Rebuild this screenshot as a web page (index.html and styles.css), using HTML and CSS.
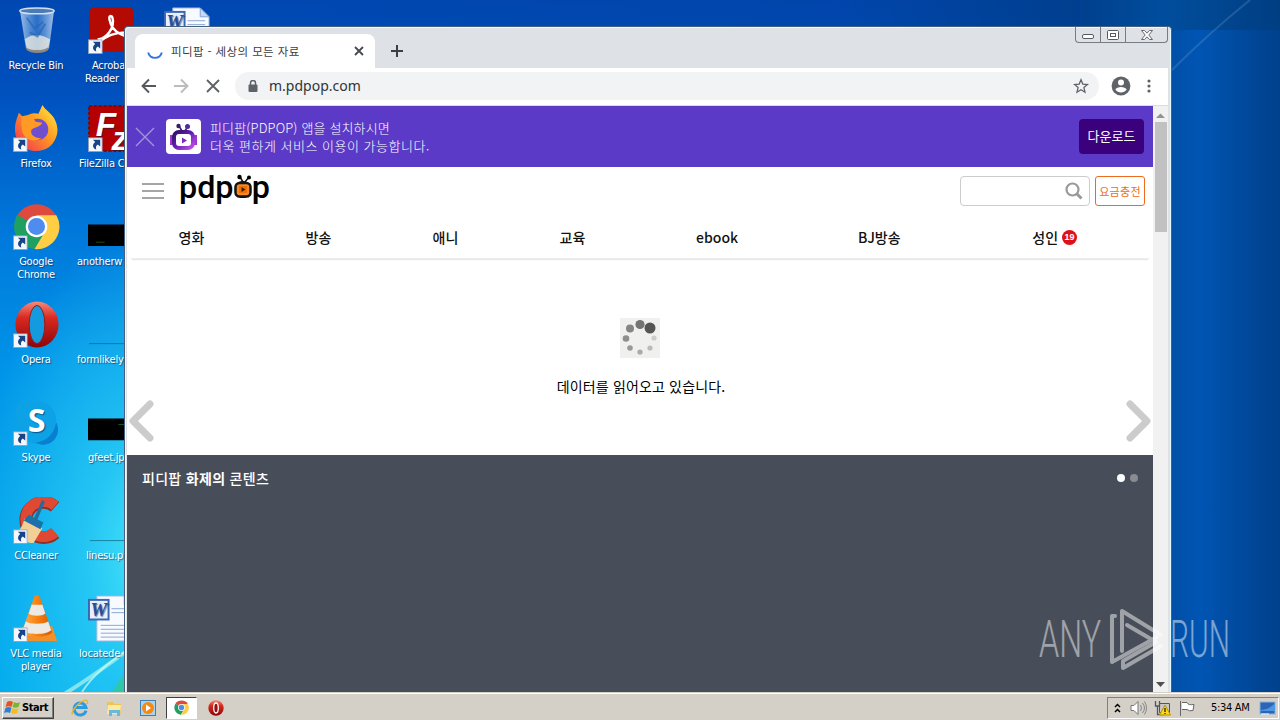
FILE: index.html
```html
<!DOCTYPE html>
<html lang="ko">
   <head>
      <meta charset="UTF-8" />
      <meta name="viewport" content="width=device-width, initial-scale=1.0" />
      <title>피디팝 - 세상의 모든 자료</title>
      <link rel="stylesheet" href="styles.css">
   </head>
   <body>
      <svg width="0" height="0" class="defs">
         <defs>
            <symbol id="shortcut" viewBox="0 0 15 15">
               <rect x=".5" y=".5" width="14" height="14" fill="#f4f8fc" stroke="#8fa3b8" />
               <path d="M5 2.5h7.5v7L10 7.4c-2 1.3-2.3 3-1.5 5.1C4.500 11.500 4 7.500 7.400 4.900z" fill="#174487" />
            </symbol>
            <symbol id="chrome" viewBox="0 0 48 48">
               <path d="M24 24 4.500 12.500A23 23 0 0 1 44 12.500z" fill="#dd4b3e" />
               <path d="M24 24 4.500 12A23 23 0 0 0 22 47l11-18z" fill="#1fa060" />
               <path d="M24 12.500H44.300A23 23 0 0 1 22 47L34 27z" fill="#ffce44" />
               <circle cx="24" cy="24" r="11" fill="#fff" />
               <circle cx="24" cy="24" r="8.700" fill="#4e8cf0" />
            </symbol>
            <linearGradient id="red" x2="0" y2="1">
               <stop stop-color="#f58a7c" /><stop offset=".35" stop-color="#d92a20" /><stop offset="1" stop-color="#8d0508" />
            </linearGradient>
            <linearGradient id="fire" x1="1" x2="0" y2="1">
               <stop stop-color="#fff14a" /><stop offset=".45" stop-color="#ff9820" /><stop offset="1" stop-color="#f0265c" />
            </linearGradient>
            <linearGradient id="glass">
               <stop stop-color="#c5dcf0" stop-opacity=".8" /><stop offset=".5" stop-color="#4c8cd8" stop-opacity=".55" /><stop offset="1" stop-color="#cde0f5" stop-opacity=".8" />
            </linearGradient>
            <linearGradient id="cone">
               <stop stop-color="#ffb050" /><stop offset=".5" stop-color="#f88210" /><stop offset="1" stop-color="#d85a00" />
            </linearGradient>
            <linearGradient id="tv" x2="1" y2="1">
               <stop stop-color="#321060" /><stop offset=".5" stop-color="#6520b8" /><stop offset="1" stop-color="#c350e8" />
            </linearGradient>
            <symbol id="worddoc" viewBox="0 0 48 48">
               <path d="M9 1h28l9 9v37H9z" fill="#f7faff" stroke="#9db6dc" />
               <path d="M37 1v9h9z" fill="#c8daf3" stroke="#84a4d2" />
               <path d="M24 14h18M24 18h18M13 31h29M13 35h29M13 39h29M13 43h29" stroke="#8aa6d4" />
               <rect x="1" y="5" width="20" height="20" fill="#e8f0fc" stroke="#3b67b5" stroke-width="2" />
               <text x="11" y="21" class="word-w" text-anchor="middle">W</text>
            </symbol>
         </defs>
      </svg>

      <main class="desktop">
         <svg class="wallpaper" width="1280" height="692">
            <path d="M0 728Q55 705 128 650" fill="none" stroke="#a5f0ef" stroke-width="4" opacity=".75" />
            <path d="M82 692Q96 670 128 650" fill="none" stroke="#c4fff0" stroke-width="2" opacity=".7" />
            <path d="M112 692L128 668V692z" fill="#35c98a" opacity=".7" />
            <path d="M1170 72Q1210 32 1250 0" fill="none" stroke="#79a9d8" stroke-width="2" opacity=".25" />
         </svg>

         <div class="icon-column">
            <div class="icon">
               <svg viewBox="0 0 48 48">
                  <path d="M7 3h35l-5 38c-1 6-22 6-24 0z" fill="url(#glass)" />
                  <path d="M12 33c8-7 18-5 26 0l-2 9c-4 4-18 4-22 0z" fill="#e9e9df" opacity=".8" />
                  <path d="M13 41c5 4 18 4 23 0v3c-4 4-18 4-22 0z" fill="#8d8880" />
                  <path d="M14 11l8 11 9-7M17 26l8 4 8-13" stroke="#2768b4" fill="none" stroke-width="2" opacity=".7" />
                  <ellipse cx="24.500" cy="4" rx="17.500" ry="3" fill="#497cb9" stroke="#d4e0e9" stroke-width="1.500" />
               </svg>
               <span>Recycle Bin</span>
            </div>
            <div class="icon">
               <svg viewBox="0 0 48 48">
                  <path d="M2 25C2 18 4 14 6 8l5 5C17 8 22 8 26 9l4-9c3 5 7 7 11 12 4 6 6 14 3 21-3 9-11 14-20 14C12 47 2 38 2 25z" fill="url(#fire)" />
                  <circle cx="25" cy="25" r="11" fill="#6f4fd0" />
                  <path d="M8 12c8-3 12-1 15 5l7 1c-3 5-8 4-11 7-2 4 2 9 10 9-9 6-20-1-20-10z" fill="#ff9a24" />
                  <use href="#shortcut" x="0" y="33" width="15" height="15" />
               </svg>
               <span>Firefox</span>
            </div>
            <div class="icon">
               <svg viewBox="0 0 48 48"><use href="#chrome" width="48" height="48" /><use href="#shortcut" y="33" width="15" height="15" /></svg>
               <span>Google<br />Chrome</span>
            </div>
            <div class="icon">
               <svg viewBox="0 0 48 48">
                  <ellipse cx="24.500" cy="24" rx="22" ry="23.500" fill="url(#red)" />
                  <ellipse cx="24.500" cy="24" rx="8" ry="19.500" fill="#149bdf" stroke="#971a18" />
                  <use href="#shortcut" y="33" width="15" height="15" />
               </svg>
               <span>Opera</span>
            </div>
            <div class="icon">
               <svg viewBox="0 0 48 48">
                  <path d="M2 14C2 4 13-3 21 3 35 0 45 10 44 24c5 8 0 20-9 22-6 2-9-1-13-1C8 44 2 34 4 23z" fill="#0ca2e5" />
                  <path d="M44 24c5 8 0 20-9 22-6 2-9-1-13-1 14-2 20-10 22-21z" fill="#087fd0" />
                  <text x="24" y="34" class="skype-s" text-anchor="middle">S</text>
                  <use href="#shortcut" y="33" width="15" height="15" />
               </svg>
               <span>Skype</span>
            </div>
            <div class="icon">
               <svg viewBox="0 0 48 48">
                  <path d="M43 10A18 18 0 1 0 43 37" fill="none" stroke="#8e3025" stroke-width="13" />
                  <path d="M43 9A18 18 0 1 0 43 36" fill="none" stroke="#df4934" stroke-width="11" />
                  <path d="M12 22l18 10-9 15c-8 0-15-4-20-9 6-2 8-8 11-16z" fill="#f3cf98" />
                  <path d="M16 18l15 8-3 7-17-9z" fill="#1c72a8" />
                  <path d="M23 23 31 4" stroke="#28699b" stroke-width="3.500" />
                  <use href="#shortcut" y="33" width="15" height="15" />
               </svg>
               <span>CCleaner</span>
            </div>
            <div class="icon">
               <svg viewBox="0 0 48 48">
                  <path d="M10 32h30l5 15H7z" fill="#f29129" />
                  <path d="M22 1q3-2 5 0l13 37c-4 6-26 6-31 0z" fill="url(#cone)" />
                  <path d="M19 10h11l3 9c-3 3-14 3-17 0zM13 27c5 3 18 3 23 0l3 9c-5 5-25 5-29 0z" fill="#eee9e2" />
                  <use href="#shortcut" y="33" width="15" height="15" />
               </svg>
               <span>VLC media<br />player</span>
            </div>
         </div>

         <div class="icon-column second">
            <div class="icon">
               <svg viewBox="0 0 48 48">
                  <rect x="1" width="46" height="46" rx="6" fill="#b40a04" />
                  <path d="M11 33c7-1 17-11 14-22-1-3-4-2-3 2 2 10 10 16 19 17 4 0 3-4-3-4-10 0-20 4-27 10z" fill="none" stroke="#fff" stroke-width="2.500" />
                  <use href="#shortcut" y="33" width="15" height="15" />
               </svg>
               <span class="indent-15">Acroba<br /><i class="pull">Reader</i></span>
            </div>
            <div class="icon">
               <svg viewBox="0 0 48 48">
                  <rect x="1" y="1" width="46" height="46" fill="#b40000" stroke="#7d0909" stroke-width="2" stroke-dasharray="3 2" />
                  <text x="8" y="32" class="fz">F</text><text x="24" y="46" class="fz">z</text>
                  <use href="#shortcut" y="33" width="15" height="15" />
               </svg>
               <span class="indent-2">FileZilla C</span>
            </div>
            <div class="icon">
               <svg viewBox="0 0 48 48"><path d="M0 22h48v22H0z" /><path d="M8 40h9" stroke="#254b08" /></svg>
               <span>anotherw</span>
            </div>
            <div class="icon">
               <svg viewBox="0 0 48 48"><path d="M1 43.500h47" stroke="#1473ae" /></svg>
               <span>formlikely</span>
            </div>
            <div class="icon">
               <svg viewBox="0 0 48 48"><path d="M0 20h48v22H0z" /><path d="M31 26h9" stroke="#166028" /></svg>
               <span class="indent-11">gfeet.jp</span>
            </div>
            <div class="icon">
               <svg viewBox="0 0 48 48"><path d="M2 44.500h46" stroke="#16849f" /></svg>
               <span class="indent-9">linesu.p</span>
            </div>
            <div class="icon">
               <svg viewBox="0 0 48 48"><use href="#worddoc" width="48" height="48" /></svg>
               <span class="indent-2">locatede</span>
            </div>
         </div>

         <div class="icon-column third">
            <div class="icon"><svg viewBox="0 0 48 48"><use href="#worddoc" width="48" height="48" /></svg></div>
         </div>

         <section class="window">
            <div class="tabstrip">
               <div class="tab">
                  <svg class="spinner" viewBox="0 0 16 16"><path d="M1.200 8.500a7 7 0 0 0 13.600 0" fill="none" stroke="#3474e0" stroke-width="1.900" /></svg>
                  <span class="tab-title">피디팝 - 세상의 모든 자료</span>
                  <svg class="tab-close" viewBox="0 0 10 10"><path d="M1 1l8 8M9 1l-8 8" stroke="#45494d" stroke-width="1.800" /></svg>
               </div>
               <svg class="new-tab" viewBox="0 0 12 12"><path d="M6 0v12M0 6h12" stroke="#3c4043" stroke-width="2" /></svg>
               <div class="controls">
                  <span><svg width="12" height="6"><rect x=".5" y=".5" width="11" height="4" rx="1.500" fill="#fff" stroke="#565a60" /></svg></span>
                  <span><svg width="12" height="10"><rect x=".5" y=".5" width="11" height="9" rx="1" fill="#fff" stroke="#565a60" /><rect x="3.500" y="3.500" width="5" height="3" fill="none" stroke="#565a60" /></svg></span>
                  <span class="close"><svg width="12" height="10"><path d="M.5.5h3L6 3.200 8.500.5h3L7.800 5l3.700 4.500h-3L6 6.800 3.500 9.500h-3L4.200 5z" fill="#fff" stroke="#666a70" /></svg></span>
               </div>
            </div>

            <div class="toolbar">
               <svg width="16" height="16" viewBox="0 0 16 16"><path d="M15 8H2M8 1.500 1.500 8 8 14.500" fill="none" stroke="#55595e" stroke-width="1.900" /></svg>
               <svg width="16" height="16" viewBox="0 0 16 16"><path d="M1 8h13M8 1.500 14.500 8 8 14.500" fill="none" stroke="#babcbe" stroke-width="1.900" /></svg>
               <svg width="16" height="16" viewBox="0 0 16 16"><path d="M2 2l12 12M14 2 2 14" stroke="#5f6368" stroke-width="1.900" /></svg>
               <div class="address">
                  <svg width="10" height="12" viewBox="0 0 10 12"><path d="M2.500 5V3a2.500 2.500 0 0 1 5 0v2" fill="none" stroke="#5f6368" stroke-width="1.500" /><rect x=".5" y="4.500" width="9" height="7.500" rx="1" fill="#5f6368" /></svg>
                  <span>m.pdpop.com</span>
                  <svg class="star" width="16" height="16" viewBox="0 0 16 16"><path d="M8 1.800l1.800 4.300 4.700.4-3.600 3.100 1.100 4.600-4-2.400-4 2.400 1.100-4.600-3.600-3.100 4.700-.4z" fill="none" stroke="#5f6368" stroke-width="1.300" /></svg>
               </div>
               <svg class="profile" width="20" height="20" viewBox="0 0 20 20"><circle cx="10" cy="10" r="9.400" fill="#5f6368" /><circle cx="10" cy="6.500" r="3" fill="#fff" /><path d="M4.300 13.500c1.500-3.400 9.900-3.400 11.400 0-2.600 4-8.800 4-11.400 0z" fill="#fff" /></svg>
               <svg class="dots" width="4" height="14" viewBox="0 0 4 14"><g fill="#5f6368"><circle cx="2" cy="2" r="1.600" /><circle cx="2" cy="7" r="1.600" /><circle cx="2" cy="12" r="1.600" /></g></svg>
            </div>

            <div class="viewport">
               <div class="page">
                  <div class="app-banner">
                     <svg width="20" height="20" viewBox="0 0 20 20"><path d="M1 1l18 18M19 1 1 19" stroke="#a294d8" stroke-width="1.400" /></svg>
                     <svg class="app-icon" width="35" height="35" viewBox="0 0 35 35">
                        <rect width="35" height="35" rx="4" fill="#fff" />
                        <path d="M13 7l3 5M21 9l-3 4" stroke="#33206b" stroke-width="1.500" />
                        <circle cx="12.500" cy="7" r="2.200" fill="#33206b" /><circle cx="21.500" cy="7.500" r="2.500" fill="#4f2b9f" />
                        <path d="M7 17H5v8h3M28 17h2v8h-3" stroke="#a135d3" fill="none" stroke-width="2" />
                        <rect x="8" y="13" width="19" height="16" rx="5" fill="#fff" stroke="url(#tv)" stroke-width="4" />
                        <rect x="11" y="17" width="13" height="9" rx="3" fill="#fff" />
                        <path d="M16 18.500v6l5-3z" fill="#8128b9" />
                     </svg>
                     <p>피디팝(PDPOP) 앱을 설치하시면<br /><span>더욱 편하게 서비스 이용이 가능합니다.</span></p>
                     <button class="download">다운로드</button>
                  </div>

                  <header class="site-header">
                     <div class="top-row">
                        <svg class="menu" width="22" height="16"><path d="M0 1h22M0 8h22M0 15h22" stroke="#888" stroke-width="1.600" /></svg>
                        <svg class="logo" width="92" height="32" viewBox="0 0 92 32">
                           <text x="0" y="24" class="logo-text" textLength="91" lengthAdjust="spacingAndGlyphs">pdpop</text>
                           <path d="M61 3l3 5M70 3l-4 5" stroke="#111" stroke-width="1.500" />
                           <circle cx="60.500" cy="3" r="2.200" /><circle cx="70" cy="3.500" r="2" />
                           <rect x="56.500" y="9" width="15" height="13.500" rx="4" fill="#f5892a" stroke="#151515" stroke-width="2.500" />
                           <rect x="60" y="12" width="8" height="7" fill="#f06f05" /><path d="M62.500 13v5l4-2.500z" fill="#3e2104" />
                        </svg>
                        <div class="search"><svg width="18" height="18" viewBox="0 0 18 18"><circle cx="7.500" cy="7.500" r="6" fill="none" stroke="#999" stroke-width="2.200" /><path d="M12 12l4.500 4.500" stroke="#999" stroke-width="3" /></svg></div>
                        <button class="charge">요금충전</button>
                     </div>
                     <nav>
                        <a>영화</a><a>방송</a><a>애니</a><a>교육</a><a class="wide">ebook</a><a class="wide">BJ방송</a><a class="wider">성인 <b class="badge">19</b></a>
                     </nav>
                  </header>

                  <div class="loading">
                     <svg width="40" height="40" viewBox="0 0 40 40">
                        <rect width="40" height="40" fill="#f0f0ee" />
                        <g fill="#6e6e6e"><circle cx="30" cy="10" r="5.500" fill="#555" /><circle cx="20" cy="6.500" r="4.600" fill="#747474" /><circle cx="10" cy="10.500" r="4" fill="#858585" /><circle cx="6" cy="20.500" r="3.300" fill="#8e8e8e" /><circle cx="10" cy="30" r="2.800" fill="#999" /><circle cx="20" cy="34" r="2.600" fill="#aaa" /><circle cx="30" cy="30" r="2.600" fill="#bbb" /><circle cx="34" cy="20" r="2.600" fill="#ccc" /></g>
                     </svg>
                     <p>데이터를 읽어오고 있습니다.</p>
                  </div>
                  <div class="arrows">
                     <svg width="26" height="42" viewBox="0 0 26 42"><path d="M22 4 5 21l17 17" /></svg>
                     <svg width="26" height="42" viewBox="0 0 26 42"><path d="M4 4l17 17L4 38" /></svg>
                  </div>

                  <section class="hot">
                     <h2>피디팝 <strong>화제의</strong> 콘텐츠</h2>
                     <div class="pager"><i class="on"></i><i></i></div>
                  </section>
               </div>
               <div class="scrollbar">
                  <svg width="9" height="5"><path d="M0 5 4.500.5 9 5z" fill="#929292" /></svg>
                  <div class="thumb"></div>
                  <svg class="down" width="9" height="5"><path d="M0 0h9L4.500 5z" fill="#505050" /></svg>
               </div>
            </div>
         </section>

         <svg class="watermark" width="194" height="66" viewBox="0 0 194 66">
            <text x="1" y="49" textLength="62" lengthAdjust="spacingAndGlyphs">ANY</text>
            <g fill="none" stroke="#fff" stroke-width="4" stroke-linejoin="round" stroke-linecap="round">
               <path d="M77 8h-3v46l45-25" /><path d="M84 43V3l39 24M89 17l29 17-33 19v7l38-22" />
            </g>
            <text x="132" y="49" textLength="60" lengthAdjust="spacingAndGlyphs">RUN</text>
         </svg>
      </main>

      <footer class="taskbar">
         <button class="start">
            <svg width="17" height="16" viewBox="0 0 17 16"><path d="M3 2q3-2 6 0L7.500 7q-3-1.500-6 0z" fill="#e45422" /><path d="M10 2q3 2 6 0l-1.500 5q-3 1.500-6 0z" fill="#75b82b" /><path d="M1.500 8q3-2 6 0L6 13q-3-1.500-6 0z" fill="#2982d8" /><path d="M8.500 8q3 2 6 0L13 13q-3 1.500-6 0z" fill="#f5bc20" /></svg>
            Start
         </button>
         <div class="quick">
            <span><svg width="18" height="18" viewBox="0 0 18 18"><path d="M15 11.500A6 6 0 1 1 15 8.500H5" fill="none" stroke="#2d9be0" stroke-width="3" /><path d="M2 15C-1 15 4 7 10 3c5-3 8-2 6 2" fill="none" stroke="#e9b52c" stroke-width="1.400" /></svg></span>
            <span><svg width="18" height="18" viewBox="0 0 18 18"><path d="M2 3h6l1 2h7v10H2z" fill="#e9c45d" /><path d="M3 6h13l-1 9H2z" fill="#ffe99e" /><path d="M4 17v-6h11v6h-3v-3H7v3z" fill="#67b9df" /></svg></span>
            <span><svg width="18" height="18" viewBox="0 0 18 18"><rect x="1.500" y="1.500" width="15" height="15" fill="#a9d4f2" stroke="#3a80bb" /><circle cx="9" cy="9" r="6" fill="#f58a12" /><path d="M7 5.500v7l5-3.500z" fill="#fff" /></svg></span>
            <span class="active"><svg width="15" height="15"><use href="#chrome" width="15" height="15" /></svg></span>
            <span><svg width="16" height="16" viewBox="0 0 16 16"><circle cx="8" cy="8" r="7.700" fill="url(#red)" /><ellipse cx="8" cy="8" rx="2.300" ry="5" fill="#92100f" stroke="#fff" stroke-width="1.300" /></svg></span>
         </div>
         <div class="tray">
            <svg class="chevrons" width="7" height="10"><path d="M1 4l2.500-2.500L6 4M1 9l2.500-2.500L6 9" fill="none" stroke="#000" stroke-width="1.500" /></svg>
            <svg class="speaker" width="17" height="16"><path d="M1 5.500h3l4-4v13l-4-4H1z" fill="#fff" stroke="#777" /><path d="M10.500 5q2 3 0 6M12.500 3q4 5 0 10M14.500 1.500q4 6.500 0 13" fill="none" stroke="#888" /></svg>
            <svg class="network" width="17" height="16"><path d="M5.500 3.500h10v9h-10z" fill="#c8c8c5" stroke="#555" /><path d="M1.500 1v5h4V1M3.500 6v8.500h7" fill="none" stroke="#555" stroke-width="1.300" /><path d="M11 5l5.500 10h-11z" fill="#ffd817" stroke="#b99300" /><path d="M11 8v4m0 1v1" stroke="#222" stroke-width="1.300" /></svg>
            <svg class="flag" width="17" height="16"><path d="M1.500 1v15M3 2.500h5q1 3 7 2l-1 6q-4 1-6-1H3" fill="#fff" stroke="#666" /></svg>
            <time>5:34 AM</time>
            <svg class="show-desktop" width="17" height="16"><rect x="1" y="2" width="15" height="12" fill="#2b65b7" stroke="#8ab2df" /><path d="M1 10q9 0 15-7v8H1z" fill="#4c97df" /><path d="M2 14h8" stroke="#fff" /></svg>
         </div>
      </footer>
   </body>
</html>
```
FILE: styles.css
```css
* {
   box-sizing: border-box;
}

body {
   margin: 0;
   width: 1280px;
   height: 720px;
   overflow: hidden;
   font-family: 'Noto Sans CJK KR', sans-serif;
}

p, h2 {
   margin: 0;
}

i {
   font-style: normal;
}

button {
   padding: 0;
   font-family: inherit;
}

svg {
   display: block;
   flex-shrink: 0;
}

.defs {
   position: absolute;
}

.desktop {
   position: relative;
   height: 692px;
   overflow: hidden;
   background:
      radial-gradient(ellipse 180px 330px at 150px 560px, #48e4fa 0%, rgba(45, 207, 246, 0.8) 35%, rgba(0, 160, 240, 0) 100%),
      linear-gradient(90deg, transparent 1160px, rgba(0, 45, 105, 0.05) 1170px, rgba(0, 38, 90, 0.35) 1280px),
      linear-gradient(90deg, transparent 300px, rgba(0, 60, 140, 0.2) 850px, #003f8f 1080px, transparent 1081px) 0 0 / 100% 30px no-repeat,
      linear-gradient(90deg, transparent 1080px, #00408d 1081px, #004f9f 1172px, #004b98 100%) 0 0 / 100% 30px no-repeat,
      linear-gradient(90deg, transparent 1150px, #004a9d 1151px, #005cc0 1200px, #004fa6 100%),
      linear-gradient(#0047b1 0, #0050be 90px, #0078db 230px, #0094e8 370px, #009eea 500px, #00a9ed 692px);
}

.wallpaper {
   position: absolute;
   inset: 0;
}

/* desktop icons */
.icon-column {
   position: absolute;
   left: 0;
   top: 7px;
   width: 72px;
   display: flex;
   flex-direction: column;
   font: 11px/13px 'DejaVu Sans Condensed', 'DejaVu Sans', sans-serif;
   letter-spacing: -0.2px;
   color: #fff;
   text-align: center;
   text-shadow: 1px 1px 1px rgba(0, 30, 70, 0.6);
}

.icon {
   height: 98px;
}

.icon svg {
   width: 47px;
   height: 47px;
   margin: 0 0 5px 13px;
}

.icon span {
   display: block;
   white-space: nowrap;
}

.second {
   left: 77px;
   text-align: left;
}

.second .icon svg {
   margin-left: 11px;
}

.third {
   left: 151px;
}

.indent-2 { padding-left: 2px; }
.indent-9 { padding-left: 9px; }
.indent-11 { padding-left: 11px; }
.indent-15 { padding-left: 15px; }
.pull { margin-left: -7px; }

.word-w {
   font: bold italic 19px 'Liberation Serif', serif;
   fill: #234fa3;
}

.skype-s {
   font: bold 33px 'Open Sans', sans-serif;
   fill: #fff;
}

.fz {
   font: italic bold 34px 'Liberation Sans', sans-serif;
   fill: #fff;
}

/* browser window */
.window {
   position: absolute;
   left: 124px;
   top: 26px;
   width: 1048px;
   height: 666px;
   display: flex;
   flex-direction: column;
   padding: 0 3px 0 2px;
   border: 1px solid #45607f;
   border-bottom: none;
   border-radius: 4px 4px 0 0;
   background: #dee1e6;
   box-shadow: inset 1px 1px #f5f8fb, inset -1px 0 #e4fafa;
}

.tabstrip {
   display: flex;
   align-items: flex-start;
   height: 41px;
   padding-left: 8px;
}

.tab {
   display: flex;
   align-items: center;
   width: 240px;
   height: 34px;
   margin-top: 7px;
   padding: 0 11px 0 12px;
   border-radius: 8px 8px 0 0;
   background: #fff;
   font-size: 12px;
   color: #3c4043;
}

.spinner {
   width: 16px;
   height: 16px;
   margin-top: 2px;
}

.tab-title {
   flex: 1;
   margin-left: 8px;
   font-size: 11.5px;
   letter-spacing: 0.4px;
}

.tab-close {
   width: 10px;
   height: 10px;
}

.new-tab {
   width: 12px;
   height: 12px;
   margin: 18px 0 0 16px;
}

.controls {
   display: flex;
   margin-left: auto;
   height: 16px;
   border: 1px solid #777c84;
   border-top: none;
   border-radius: 0 0 4px 4px;
}

.controls span {
   display: flex;
   width: 25px;
   align-items: center;
   justify-content: center;
   border-right: 1px solid #777c84;
}

.controls span:first-child {
   padding-top: 5px;
}

.controls .close {
   width: 41px;
   border: none;
}

.toolbar {
   display: flex;
   align-items: center;
   gap: 16px;
   height: 38px;
   padding: 0 17px 2px 14px;
   border-bottom: 1px solid #dadce0;
   background: #fff;
}

.address {
   display: flex;
   align-items: center;
   flex: 1;
   height: 28px;
   margin-right: -4px;
   margin-left: -2px;
   padding: 0 10px 0 13px;
   border-radius: 14px;
   background: #f1f3f4;
   font: 14px 'Noto Sans', sans-serif;
   color: #303438;
}

.address span {
   margin: 0 auto 0 11px;
}

.dots {
   margin-right: 0;
}

.viewport {
   display: flex;
   flex: 1;
   background: #fff;
}

.page {
   display: flex;
   flex-direction: column;
   width: 1026px;
}

.app-banner {
   display: flex;
   align-items: center;
   height: 61px;
   padding: 0 9px 0 8px;
   background: #5b3ac7;
   color: #fff;
   font-size: 13px;
   line-height: 18px;
}

.app-icon {
   margin: 0 9px 0 11px;
}

.app-banner p {
   font-weight: 300;
   letter-spacing: 0.15px;
}

.app-banner p span {
   letter-spacing: 0.5px;
}

.download {
   width: 65px;
   height: 35px;
   margin-left: auto;
   padding-bottom: 3px;
   border: none;
   border-radius: 4px;
   background: #3b007b;
   color: #fff;
   font-size: 13px;
}

.site-header {
   height: 92px;
   margin: 0 4px;
   border-bottom: 1px solid #eee;
   box-shadow: 0 2px 1px -1px #e8e8e8;
}

.top-row {
   display: flex;
   align-items: center;
   height: 48px;
   padding: 0 4px 0 11px;
}

.logo {
   margin: -2px auto 0 15px;
}

.logo-text {
   font: 500 32px Roboto, sans-serif;
}

.search {
   display: flex;
   align-items: center;
   justify-content: flex-end;
   width: 130px;
   height: 30px;
   padding-right: 6px;
   border: 1px solid #ccc;
   border-radius: 4px;
}

.charge {
   width: 50px;
   height: 30px;
   margin-left: 5px;
   border: 1px solid #ed6b1c;
   border-radius: 3px;
   background: #fff;
   color: #ed6b1c;
   font-size: 11px;
   letter-spacing: 0.3px;
}

nav {
   display: flex;
   margin-left: -3px;
   line-height: 44px;
   font-size: 14px;
   font-weight: 500;
   text-align: center;
   color: #111;
}

nav a {
   width: 128px;
}

nav .wide {
   width: 163.5px;
}

nav .wider {
   display: flex;
   align-items: center;
   justify-content: center;
   gap: 4px;
   width: 190px;
}

.badge {
   width: 15px;
   height: 15px;
   border-radius: 50%;
   background: #df1017;
   color: #fff;
   font: bold 9px/15px 'Liberation Sans', sans-serif;
}

.loading {
   display: flex;
   flex-direction: column;
   align-items: center;
   height: 141px;
   padding-top: 59px;
   font-size: 14px;
   color: #000;
}

.loading p {
   margin: 18px 0 0 2px;
   letter-spacing: 0.15px;
}

.arrows {
   display: flex;
   justify-content: space-between;
   height: 55px;
   padding: 0 1px;
   fill: none;
   stroke: #ccc;
   stroke-width: 7px;
   stroke-linecap: round;
   stroke-linejoin: round;
}

.hot {
   display: flex;
   justify-content: space-between;
   flex: 1;
   padding: 13px 15px;
   background: #484e59;
   color: #fff;
}

.hot h2 {
   font-size: 14px;
   font-weight: 500;
   line-height: 21px;
   letter-spacing: 0.3px;
}

.pager {
   display: flex;
   gap: 5px;
   padding-top: 6px;
}

.pager i {
   width: 8px;
   height: 8px;
   border-radius: 50%;
   background: #888b91;
}

.pager .on {
   background: #fff;
}

.scrollbar {
   display: flex;
   flex-direction: column;
   align-items: center;
   flex: 1;
   padding: 7px 0 5px;
   background: #f1f1f1;
}

.thumb {
   width: 12px;
   height: 110px;
   margin-top: 4px;
   background: #c1c1c1;
}

.down {
   margin-top: auto;
}

.watermark {
   position: absolute;
   left: 1038px;
   top: 608px;
   opacity: 0.48;
   fill: #fff;
   font: 300 51px Roboto, sans-serif;
}

/* taskbar */
.taskbar {
   display: flex;
   align-items: center;
   height: 28px;
   padding: 2px 1px 0 2px;
   border-top: 1px solid #d4d0c8;
   box-shadow: inset 0 1px #fff;
   background: #d4d0c8;
   font: 11px 'DejaVu Sans Condensed', sans-serif;
}

.start {
   display: flex;
   align-items: center;
   gap: 1px;
   width: 52px;
   height: 22px;
   padding-left: 1px;
   border: 1px solid;
   border-color: #fff #404040 #404040 #fff;
   box-shadow: inset -1px -1px #808080;
   background: #d4d0c8;
   font: bold 11px 'DejaVu Sans Condensed', sans-serif;
   letter-spacing: -0.4px;
}

.quick {
   display: flex;
   gap: 3px;
   margin-left: 10px;
}

.quick span {
   display: flex;
   align-items: center;
   justify-content: center;
   width: 31px;
   height: 22px;
}

.quick .active {
   border: 1px solid;
   border-color: #404040 #fff #fff #404040;
   background: #fff;
}

.tray {
   display: flex;
   align-items: center;
   width: 172px;
   height: 22px;
   margin-left: auto;
   padding: 0 2px 0 6px;
   border: 1px solid;
   border-color: #808080 #fff #fff #808080;
}

.speaker { margin-left: 9px; }
.network { margin-left: 7px; }
.flag { margin-left: 8px; }

.tray time {
   margin-left: 15px;
   white-space: nowrap;
   letter-spacing: -0.3px;
}

.show-desktop {
   margin-left: auto;
}
```
